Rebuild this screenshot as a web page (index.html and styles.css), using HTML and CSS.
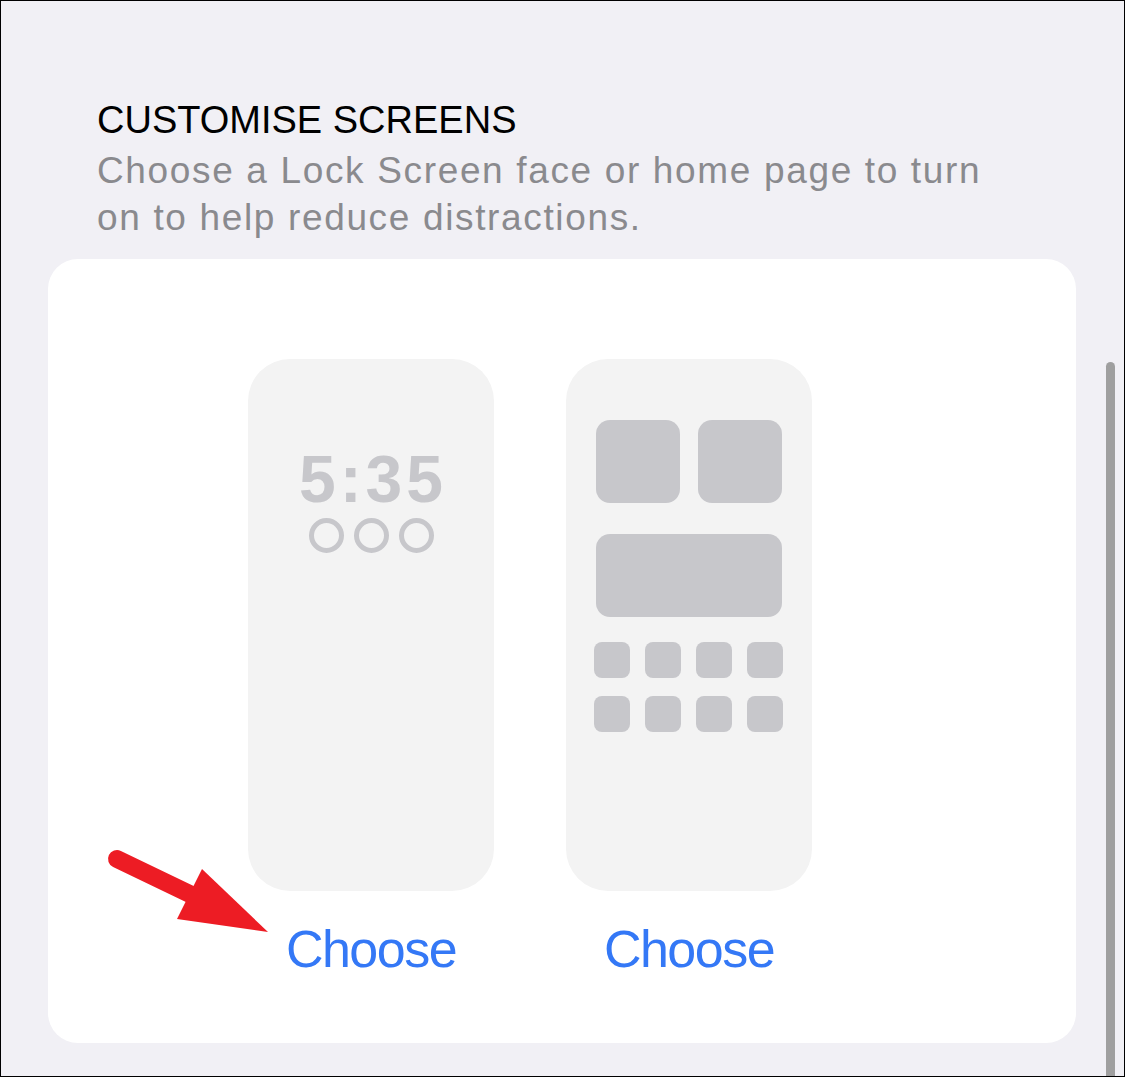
FILE: index.html
```html
<!DOCTYPE html>
<html lang="en">
<head>
    <meta charset="UTF-8">
    <meta name="viewport" content="width=device-width, initial-scale=1.0">
    <title>Customise Screens</title>
    <link rel="stylesheet" href="styles.css">
</head>
<body>
    <div class="screen">
        <div class="section-header">
            <h2 class="section-title">CUSTOMISE SCREENS</h2>
            <p class="section-desc">Choose a Lock Screen face or home page to turn on to help reduce distractions.</p>
        </div>
        <div class="card">
            <div class="option">
                <div class="phone lock">
                    <div class="clock">5:35</div>
                    <div class="rings">
                        <span class="ring"></span>
                        <span class="ring"></span>
                        <span class="ring"></span>
                    </div>
                </div>
                <button class="choose">Choose</button>
            </div>
            <div class="option">
                <div class="phone home">
                    <div class="widget-row">
                        <div class="widget"></div>
                        <div class="widget"></div>
                    </div>
                    <div class="widget wide"></div>
                    <div class="apps">
                        <div class="app"></div>
                        <div class="app"></div>
                        <div class="app"></div>
                        <div class="app"></div>
                        <div class="app"></div>
                        <div class="app"></div>
                        <div class="app"></div>
                        <div class="app"></div>
                    </div>
                </div>
                <button class="choose">Choose</button>
            </div>
        </div>
        <svg class="arrow" width="1125" height="1077" viewBox="0 0 1125 1077">
            <line x1="117" y1="859" x2="196" y2="897" stroke="#ed1c24" stroke-width="18" stroke-linecap="round"/>
            <polygon points="202,869 268,932 177,919" fill="#ed1c24"/>
        </svg>
        <div class="scrollbar"></div>
    </div>
</body>
</html>
```

FILE: styles.css
```css
* {
    box-sizing: border-box;
}
body {
    margin: 0;
    font-family: "Liberation Sans", Arial, sans-serif;
}
.screen {
    position: relative;
    width: 1125px;
    height: 1077px;
    background: #f1f0f5;
    border: 1px solid #000;
    overflow: hidden;
}
.section-header {
    padding: 96px 0 0 96px;
    width: 1000px;
}
.section-title {
    margin: 0;
    font-size: 38px;
    line-height: 46px;
    font-weight: normal;
    color: #000;
}
.section-desc {
    margin: 4px 0 0;
    font-size: 37px;
    line-height: 47px;
    letter-spacing: 1.65px;
    color: #8a8a8e;
}
.card {
    margin: 18px 0 0 47px;
    width: 1028px;
    height: 784px;
    background: #fff;
    border-radius: 30px;
    padding: 100px 0 0 200px;
    display: flex;
    gap: 72px;
}
.option {
    display: flex;
    flex-direction: column;
    align-items: center;
    width: 246px;
}
.phone {
    width: 246px;
    height: 532px;
    background: #f3f3f3;
    border-radius: 42px;
}
.lock {
    padding-top: 87px;
    display: flex;
    flex-direction: column;
    align-items: center;
}
.clock {
    font-size: 66px;
    line-height: 66px;
    font-weight: bold;
    letter-spacing: 4px;
    margin-left: 4px;
    color: #c7c7cb;
}
.rings {
    margin-top: 6px;
    display: flex;
    gap: 10px;
}
.ring {
    width: 35px;
    height: 35px;
    border: 5px solid #c7c7cb;
    border-radius: 50%;
}
.home {
    padding: 61px 28px 0 28px;
}
.widget-row {
    display: flex;
    gap: 18px;
    padding: 0 2px;
}
.widget {
    width: 84px;
    height: 83px;
    background: #c7c7cb;
    border-radius: 14px;
}
.widget.wide {
    width: 186px;
    height: 83px;
    margin: 31px 0 0 2px;
}
.apps {
    margin-top: 25px;
    display: grid;
    grid-template-columns: repeat(4, 36px);
    gap: 18px 15px;
}
.app {
    height: 36px;
    background: #c7c7cb;
    border-radius: 8px;
}
.choose {
    margin-top: 28px;
    background: none;
    border: none;
    padding: 0;
    font-family: "Liberation Sans", Arial, sans-serif;
    font-size: 52px;
    line-height: 60px;
    letter-spacing: -1.5px;
    color: #3478f6;
    cursor: pointer;
}
.arrow {
    position: absolute;
    left: -1px;
    top: -1px;
    pointer-events: none;
}
.scrollbar {
    position: absolute;
    left: 1105px;
    top: 361px;
    width: 9px;
    height: 740px;
    background: #9f9f9f;
    border-radius: 5px;
}
```
